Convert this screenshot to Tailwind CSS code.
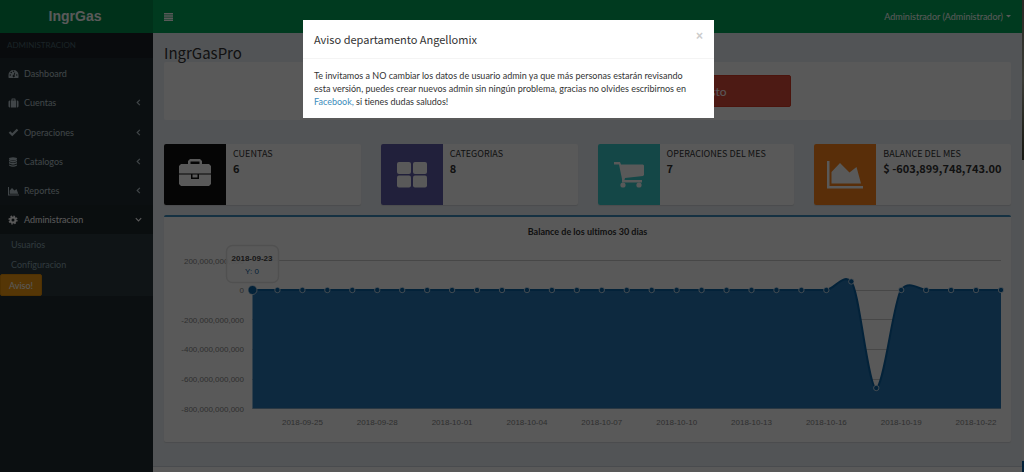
<!DOCTYPE html>
<html lang="es">
<head>
<meta charset="utf-8">
<title>IngrGasPro</title>
<script src="https://cdn.jsdelivr.net/npm/@tailwindcss/browser@4"></script>
</head>
<body class="relative min-h-screen overflow-hidden bg-[#222d32] font-['Lato','Noto_Sans',sans-serif] text-[9px] leading-[13px] text-[#333] [font-variant-ligatures:none]">
<div class="flex min-h-screen">
  <aside class="flex w-[153px] shrink-0 flex-col text-[#b8c7ce]">
    <a href="#" class="flex h-[33px] items-center justify-center bg-[#008d4c] pr-[3px] font-['Liberation_Sans',sans-serif] text-[14px] font-bold text-white">IngrGas</a>
    <div class="flex h-[25px] items-center bg-[#1a2226] px-[7px] text-[8px] text-[#4b646f]">ADMINISTRACION</div>
    <nav class="flex flex-col pt-px">
      <a href="#" class="flex h-[29px] items-center gap-[5px] px-2"><svg class="w-[11px]" viewBox="0 0 22 20" fill="currentColor"><path fill-rule="evenodd" d="M1 12a10 10 0 0 1 20 0v5l-1 1H2l-1-1zM3 12a1.4 1.4 0 1 0 3 0 1.4 1.4 0 0 0-3 0m2-5a1.4 1.4 0 1 0 3 0 1.4 1.4 0 0 0-3 0m4.500-2.500a1.400 1.400 0 1 0 3 0 1.400 1.400 0 0 0-3 0M16 12a1.400 1.400 0 1 0 3 0 1.400 1.400 0 0 0-3 0M13 7l-2 5a2.300 2.300 0 1 0 2 .6L14.500 7.400z"/></svg>Dashboard</a>
      <a href="#" class="flex h-[29px] items-center gap-[5px] px-2"><svg class="w-[11px]" viewBox="0 0 22 20" fill="currentColor"><path fill-rule="evenodd" d="M7 5V2l1-1h6l1 1v3h1v14H6V5zm2 0h4V3H9zM4.500 5v14H3l-2-2V7l2-2zm13 0H19l2 2v10l-2 2h-1.500z"/></svg><span class="grow">Cuentas</span><svg class="mr-[2px] w-[9px]" viewBox="0 0 20 20" fill="none" stroke="currentColor" stroke-width="2.500"><path d="m13 4-6 6 6 6"/></svg></a>
      <a href="#" class="flex h-[30px] items-center gap-[5px] px-2"><svg class="w-[11px]" viewBox="0 0 22 20" fill="none" stroke="currentColor" stroke-width="4.500"><path d="m3 10 5.500 5.500L19 5"/></svg><span class="grow">Operaciones</span><svg class="mr-[2px] w-[9px]" viewBox="0 0 20 20" fill="none" stroke="currentColor" stroke-width="2.500"><path d="m13 4-6 6 6 6"/></svg></a>
      <a href="#" class="flex h-[29px] items-center gap-[5px] px-2"><svg class="w-[11px]" viewBox="0 0 22 20" fill="currentColor"><ellipse cx="10" cy="3.500" rx="8" ry="3"/><path d="M2 5.500q8 4 16 0v3q-8 4.500-16 0zM2 10.200q8 4 16 0v3q-8 4.500-16 0zM2 15q8 4 16 0v2q-8 5-16 0z"/></svg><span class="grow">Catalogos</span><svg class="mr-[2px] w-[9px]" viewBox="0 0 20 20" fill="none" stroke="currentColor" stroke-width="2.500"><path d="m13 4-6 6 6 6"/></svg></a>
      <a href="#" class="flex h-[29px] items-center gap-[5px] px-2"><svg class="w-[11px]" viewBox="0 0 22 20" fill="currentColor"><path d="M0 2h2v15h20v2H0zM3.500 15.500V9L8 4l5 5 4-3 3.500 9.500z"/></svg><span class="grow">Reportes</span><svg class="mr-[2px] w-[9px]" viewBox="0 0 20 20" fill="none" stroke="currentColor" stroke-width="2.500"><path d="m13 4-6 6 6 6"/></svg></a>
      <a href="#" class="flex h-[29px] items-center gap-[5px] bg-[#1e282c] px-2 text-white"><svg class="w-[11px]" viewBox="0 0 22 20" fill="none" stroke="currentColor"><circle cx="10" cy="10" r="5" stroke-width="4"/><circle cx="10" cy="10" r="7.800" stroke-width="2.800" stroke-dasharray="3.200 2.926"/></svg><span class="grow">Administracion</span><svg class="mr-[2px] w-[9px]" viewBox="0 0 20 20" fill="none" stroke="currentColor" stroke-width="2.500"><path d="m4 7 6 6 6-6"/></svg></a>
      <div class="flex flex-col items-start bg-[#2c3b41] text-[#8aa4af]">
        <a href="#" class="flex h-5 items-center px-[11px]">Usuarios</a>
        <a href="#" class="flex h-5 items-center px-[11px]">Configuracion</a>
        <button type="button" class="h-[22px] w-[42px] rounded-[2px] border border-[#e08e0b] bg-[#f39c12] text-white">Aviso!</button>
      </div>
    </nav>
  </aside>
  <div class="flex min-w-0 grow flex-col bg-[#ecf0f5]">
    <header class="flex h-[33px] shrink-0 items-center justify-between bg-[#00a65a] px-[11px] text-white">
      <button type="button" aria-label="Menú"><svg class="h-[10px] w-[10px]" viewBox="0 0 10 10" fill="currentColor"><path d="M0 1h9v1.500H0zm0 2.200h9v1.500H0zm0 2.200h9v1.500H0zm0 2.200h9v1.500H0z"/></svg></button>
      <button type="button" class="flex items-center gap-[3px]">Administrador (Administrador)<svg class="w-[5px]" viewBox="0 0 6 3" fill="currentColor"><path d="M0 0h6L3 3z"/></svg></button>
    </header>
    <main class="flex grow flex-col px-[11px] pt-[10px]">
      <h1 class="relative z-10 h-[19px] font-['Noto_Sans_CJK_SC','Noto_Sans',sans-serif] text-[15px] leading-[20px]">IngrGasPro</h1>
      <section class="flex h-[58px] justify-center rounded-[2px] bg-white pt-[13px]">
        <button type="button" class="h-8 w-[203px] rounded-[2px] bg-[#00a65a] text-[12px] text-white">Agregar Ingreso</button>
        <button type="button" class="h-8 w-[203px] rounded-[2px] border border-[#d73925] bg-[#dd4b39] text-[12px] text-white">Agregar Gasto</button>
      </section>
      <section class="mt-6 grid grid-cols-4 gap-5 font-['Noto_Sans_CJK_SC','Noto_Sans',sans-serif]">
        <div class="flex h-[61px] rounded-[2px] bg-white shadow-[0_1px_1px_rgba(0,0,0,0.1)]"><div class="flex w-[62px] shrink-0 items-center justify-center rounded-l-[2px] bg-[#111]"><svg class="w-8 -translate-y-[2px]" viewBox="0 0 32 28" fill="#fff"><path fill-rule="evenodd" d="M9 5V2l2-2h10l2 2v3h7l2 2v7.500H0V7l2-2zm2.500 0h9V2.500h-9z"/><path d="M0 15.500h12V20h8v-4.500h12V25l-2 2H2l-2-2z"/><path d="M13.500 15.500h5v3h-5z"/></svg></div><div class="px-[7px] pt-[3px]"><div>CUENTAS</div><b class="block text-[11px] leading-[17px]">6</b></div></div>
        <div class="flex h-[61px] rounded-[2px] bg-white shadow-[0_1px_1px_rgba(0,0,0,0.1)]"><div class="flex w-[62px] shrink-0 items-center justify-center rounded-l-[2px] bg-[#605ca8]"><svg class="w-[30px]" viewBox="0 0 30 26" fill="#fff"><rect width="14" height="12" rx="2"/><rect x="16" width="14" height="12" rx="2"/><rect y="13.500" width="14" height="12" rx="2"/><rect x="16" y="13.500" width="14" height="12" rx="2"/></svg></div><div class="px-[7px] pt-[3px]"><div>CATEGORIAS</div><b class="block text-[11px] leading-[17px]">8</b></div></div>
        <div class="flex h-[61px] rounded-[2px] bg-white shadow-[0_1px_1px_rgba(0,0,0,0.1)]"><div class="flex w-[62px] shrink-0 items-center justify-center rounded-l-[2px] bg-[#39cccc]"><svg class="w-[30px]" viewBox="0 0 30 26" fill="#fff"><path d="M0 0h6l1 2.500h22l1 1V13l-1 1-18 2-.5 2H28v2.500H8V17L5 2.500H0z"/><circle cx="9" cy="23" r="2.600"/><circle cx="25" cy="23" r="2.600"/></svg></div><div class="px-[7px] pt-[3px]"><div>OPERACIONES DEL MES</div><b class="block text-[11px] leading-[17px]">7</b></div></div>
        <div class="flex h-[61px] rounded-[2px] bg-white shadow-[0_1px_1px_rgba(0,0,0,0.1)]"><div class="flex w-[62px] shrink-0 items-center justify-center rounded-l-[2px] bg-[#ff851b]"><svg class="w-9" viewBox="0 0 36 28" fill="#fff"><path d="M0 0h2.500v25H36v2.500H0zM4.500 22.500V11L13 2l9.500 9.500L29.500 6 34 22.500z"/></svg></div><div class="px-[7px] pt-[3px] whitespace-nowrap"><div>BALANCE DEL MES</div><b class="block text-[11px] leading-[17px]">$ -603,899,748,743.00</b></div></div>
      </section>
      <section class="mt-[10px] rounded-[2px] border-t-2 border-[#3c8dbc] bg-white shadow-[0_1px_1px_rgba(0,0,0,0.1)]">
        <h2 class="pt-2 text-center font-bold">Balance de los ultimos 30 dias</h2>
        <svg class="block w-full font-['Liberation_Sans',sans-serif] text-[8px]" viewBox="164 238 847 204" role="img" aria-label="Balance de los ultimos 30 dias">
          <path stroke="#ccc" d="M252 260.500h749M252 290.500h749M252 319.500h749M252 349.500h749M252 379.500h749M252 408.500h749"/>
          <g id="ylabels" fill="#888" text-anchor="end"></g>
          <g id="xlabels" fill="#888" text-anchor="middle"></g>
          <path d="M252.500 290H826C834 290 843 273 851 281.500C859 287 868 388 876 388C884 388 893 303 901 290C909 280 918 289 926 290H1001V408.500H252.500z" fill="#2577b5"/>
          <path d="M252.500 290H826C834 290 843 273 851 281.500C859 287 868 388 876 388C884 388 893 303 901 290C909 280 918 289 926 290H1001" fill="none" stroke="#0b62a4" stroke-width="2"/>
          <g id="points" fill="#0b62a4" stroke="#fff" stroke-width=".7"></g>
          <rect x="226.500" y="245.500" width="52" height="37" rx="6" fill="#fff" fill-opacity=".85" stroke="#e6e6e6" stroke-width="1.500"/>
          <g text-anchor="middle"><text x="252" y="260.500" font-weight="bold" fill="#444">2018-09-23</text><text x="252" y="273.500" fill="#0b62a4">Y: 0</text></g>
        </svg>
      </section>
      <div class="grow"></div>
    </main>
    <footer class="h-[6px] shrink-0 border-t border-[#d2d6de] bg-white"></footer>
  </div>
  <div class="flex w-[2px] shrink-0 flex-col bg-[#f4f4f4]">
    <div class="h-[160px] bg-linear-to-b from-[#776] via-[#aa9] to-[#443]"></div>
    <div class="grow"></div>
    <div class="h-[11px] bg-[#0b62a4]"></div>
  </div>
</div>
<div class="absolute inset-0 z-20 flex items-start justify-center bg-black/65 pt-5">
  <div role="dialog" aria-labelledby="aviso" class="mr-[7px] w-[411px] bg-white">
    <div class="flex h-[39px] items-start justify-between border-b border-[#f4f4f4] px-[11px] pt-[10px]">
      <h4 id="aviso" class="font-['Noto_Sans_CJK_SC','Noto_Sans',sans-serif] text-[11px] leading-[19px]">Aviso departamento Angellomix</h4>
      <button type="button" aria-label="Cerrar" class="font-['Liberation_Sans',sans-serif] text-[12px] leading-[13px] font-bold text-[#ccc]">×</button>
    </div>
    <p class="py-[10px] pl-[11px] whitespace-nowrap">Te invitamos a NO cambiar los datos de usuario admin ya que más personas estarán revisando<br>esta versión, puedes crear nuevos admin sin ningún problema, gracias no olvides escribirnos en<br><a href="#" class="text-[#3c8dbc]">Facebook,</a> si tienes dudas saludos!</p>
  </div>
</div>
<script>
  const ns = 'http://www.w3.org/2000/svg';
  const add = (id, tag, attrs, text) => {
    const el = document.createElementNS(ns, tag);
    for (const k in attrs) el.setAttribute(k, attrs[k]);
    if (text) el.textContent = text;
    document.getElementById(id).appendChild(el);
  };
  const step = 748.5 / 30;
  ['200,000,000,000', '0', '-200,000,000,000', '-400,000,000,000', '-600,000,000,000', '-800,000,000,000']
    .forEach((t, i) => add('ylabels', 'text', { x: 244, y: 263.5 + i * 29.6 }, t));
  ['2018-09-25', '2018-09-28', '2018-10-01', '2018-10-04', '2018-10-07', '2018-10-10', '2018-10-13', '2018-10-16', '2018-10-19', '2018-10-22']
    .forEach((t, i) => add('xlabels', 'text', { x: 252.5 + (2 + i * 3) * step, y: 425 }, t));
  for (let i = 0; i <= 30; i++) {
    const y = i === 24 ? 281.5 : i === 25 ? 388 : 290;
    add('points', 'circle', { cx: 252.5 + i * step, cy: y, r: i ? 2.7 : 4.5 });
  }
</script>
</body>
</html>
